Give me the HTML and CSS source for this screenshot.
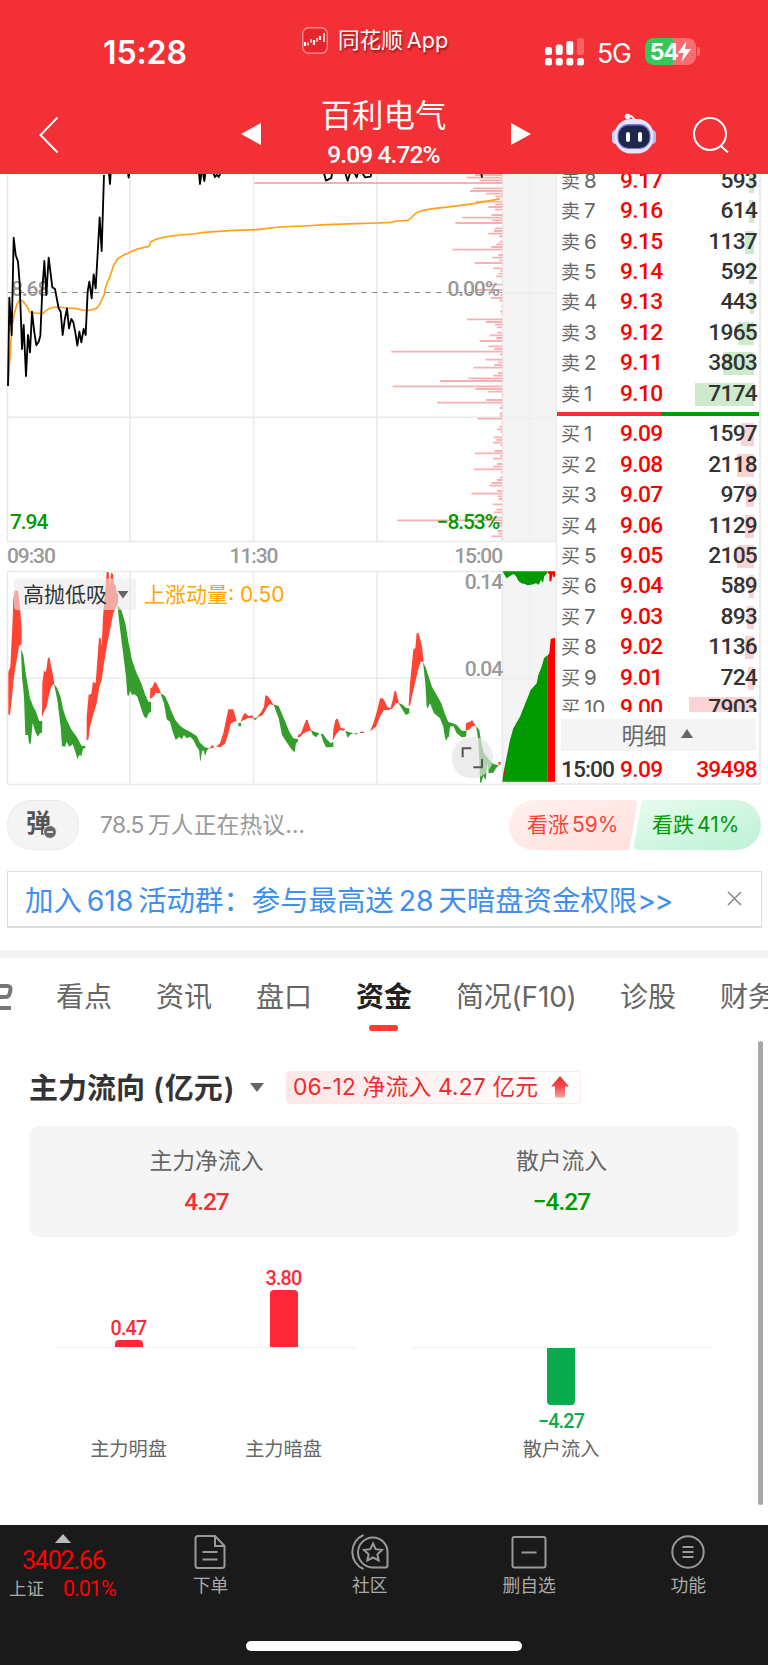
FILE: index.html
```
<!DOCTYPE html>
<html lang="zh-CN">

<head>
    <meta charset="UTF-8">
    <meta name="viewport" content="width=device-width, initial-scale=1.0">
    <title>百利电气</title>
    <link rel="stylesheet" href="styles.css">
</head>

<body>

    <header class="header">
        <div class="status">
            <div class="time">15:28</div>
            <div class="app">
                <svg width="26" height="27" viewBox="0 0 26 27">
                    <rect x=".7" y=".7" width="24.6" height="25.6" rx="6" fill="#e8252c" stroke="#ff8a8d" stroke-width="1.4"/>
                    <path d="M3 15v4M12 13v5M18 9v4" stroke="#fff" stroke-width="2.2"/>
                    <path d="M6 15.500v3M9 12v3.500M15 11v3.500M22 6v9" stroke="#fff" stroke-width="1.500"/>
                </svg>
                <span>同花顺<i>App</i></span>
            </div>
            <div class="signal">
                <svg width="40" height="28" viewBox="0 0 40 28" fill="#fff">
                    <rect x="0" y="9" width="7" height="8" rx="2.5"/>
                    <rect x="10.7" y="6.500" width="7" height="10.500" rx="2.500"/>
                    <rect x="21.300" y="3" width="7" height="14" rx="2.500"/>
                    <rect x="32" y="0" width="7" height="17" rx="2.500" opacity=".25"/>
                    <rect x="0" y="20" width="7" height="7.500" rx="2.500"/>
                    <rect x="10.700" y="20" width="7" height="7.500" rx="2.500"/>
                    <rect x="21.300" y="20" width="7" height="7.500" rx="2.500"/>
                    <rect x="32" y="20" width="7" height="7.500" rx="2.500"/>
                </svg>
            </div>
            <div class="net">5G</div>
            <div class="battery">
                <span>54</span>
                <svg width="13" height="21" viewBox="0 0 13 21"><path d="M8.500 0L0 12h5.500L3.500 21 13 8H7z" fill="#fff"/></svg>
            </div>
            <div class="nub"></div>
        </div>
        <div class="titlebar">
            <svg class="back" width="20" height="38" viewBox="0 0 20 38"><path d="M18.500 1.500L1.500 19l17 17.500" fill="none" stroke="#fff" stroke-width="2"/></svg>
            <svg class="prev" width="20" height="22" viewBox="0 0 20 22"><path d="M20 0v22L0 11z" fill="#fff"/></svg>
            <div class="stock">
                <h1>百利电气</h1>
                <p>9.09 4.72%</p>
            </div>
            <svg class="next" width="20" height="22" viewBox="0 0 20 22"><path d="M0 0v22l20-11z" fill="#fff"/></svg>
            <svg class="robot" width="44" height="42" viewBox="0 0 44 42">
                <path d="M15 3q7-1 8 6" fill="none" stroke="#e9eafa" stroke-width="2"/>
                <circle cx="15.500" cy="3.500" r="2.800" fill="#fff"/>
                <rect x="0" y="17" width="8" height="14" rx="4" fill="#cfcdf5"/>
                <rect x="36" y="17" width="8" height="14" rx="4" fill="#b9b5ef"/>
                <rect x="2.500" y="6" width="39" height="34.500" rx="16" fill="#e4e6fa"/>
                <rect x="5.500" y="11" width="33" height="25" rx="11" fill="#7f74e0"/>
                <rect x="6.500" y="12.500" width="31" height="22.500" rx="10" fill="#1e2649"/>
                <rect x="14" y="19" width="4" height="10" rx="2" fill="#fff"/>
                <rect x="26" y="19" width="4" height="10" rx="2" fill="#fff"/>
            </svg>
            <svg class="search" width="37" height="38" viewBox="0 0 37 38"><circle cx="17" cy="18" r="16" fill="none" stroke="#fff" stroke-width="2"/><path d="M28 30l7 6.500" stroke="#fff" stroke-width="2"/></svg>
        </div>
    </header>

    <main>
        <section class="market">
            <svg class="chart" width="557" height="612" viewBox="0 174 557 612">
                <!-- grid -->
                <rect x="502" y="174" width="54" height="368" fill="#f4f4f4"/>
                <rect x="502" y="571" width="54" height="213" fill="#f4f4f4"/>
                <path class="grid" d="M7.500 174V541.500H557M130 174V541M253.500 174V541M377 174V541M502.500 174V541M7.500 417.300H502M502 293.300H556M7.500 784.500V571.500H557M7.500 784.500H557M130 571V784M253.500 571V784M377 571V784M502.500 571V784M7.500 678.300H502M556.500 174V784"/>
                <path class="grid dots" d="M530 174V541M530 571V784M503 418H556M503 679H556"/>

                <text x="11" y="296" class="num gray">8.68</text>
                <path d="M8 292.500H502" stroke="#888" stroke-width="1.200" stroke-dasharray="5.500 5.200"/>

                <!-- chip distribution -->
                <path class="chips" transform="translate(240 170) scale(.33333)" d="M787 15H705M787 23H680M787 31H718M787 39H43M787 55H699M787 63H690M787 71H738M787 79H766M787 95H708M787 103H764M787 111H745M787 119H764M787 135H755M787 143H667M787 151H757M787 159H646M787 175H764M787 183H762M787 191H745M787 199H777M787 215H778M787 223H769M787 231H754M787 239H637M787 255H775M787 263H757M787 271H777M787 279H704M787 295H759M787 303H781M787 311H775M787 319H768M787 344H738M787 360H708M787 376H780M787 384H753M787 392H778M787 408H784M787 424H781M787 432H784M787 448H681M787 456H737M787 464H765M787 472H770M787 488H771M787 496H750M787 504H769M787 513H719M787 529H745M787 537H763M787 545H454M787 553H779M787 569H737M787 577H774M787 585H763M787 593H700M787 609H774M787 617H760M787 625H685M787 633H600M787 649H458M787 657H706M787 665H745M787 673H785M787 690H738M787 698H591M787 706H784M787 714H779"/>
                <path class="chips" transform="translate(0 390) scale(.35714 .33333)" d="M1406 70H1398M1406 78H1400M1406 86H1337M1406 102H1404M1406 110H1398M1406 118H1391M1406 126H1402M1406 142H1383M1406 150H1390M1406 158H1380M1406 166H1401M1406 183H1384M1406 190H1330M1406 198H1400M1406 206H1380M1406 222H1391M1406 230H1380M1406 238H1327M1406 246H1404M1406 262H1399M1406 270H1391M1406 279H1376M1406 287H1370M1406 303H1392M1406 311H1320M1406 319H1393M1406 327H1396M1406 343H1380M1406 359H1390M1406 367H1382M1406 383H1350M1406 391H1112M1406 399H1390M1406 407H1394M1406 423H1393M1406 431H1395M1406 439H1376M1406 447H1404"/>

                <!-- average and price lines -->
                <g transform="translate(0 170) scale(.33333)" fill="none" stroke-linejoin="round">
                    <path stroke="#ff9f1a" stroke-width="5" d="M24 648L30 560 36 470 42 435 50 405 58 390 68 393 78 405 90 427 105 429 128 431 140 420 155 413 175 411 200 414 225 415 245 420 265 421 290 415 300 402 312 375 318 348 330 320 340 288 352 267 370 256 390 247 412 237 447 229 453 215 470 207 500 200 540 195 580 192 610 187 690 182 770 179 840 171 910 168 980 164 1070 161 1130 159 1175 157 1190 153 1223 151 1235 142 1248 129 1270 121 1300 116 1360 109 1420 101 1480 90 1500 86"/>
                    <path stroke="#000" stroke-width="5.500" d="M24 648L28 383 35 495 41 203 47 255 54 275 59 340 66 537 71 465 78 618 84 495 90 547 96 425 102 480 109 526 116 515 121 497 127 360 133 273 139 375 146 263 157 352 165 357 176 415 182 425 188 495 194 450 201 415 207 475 214 447 220 457 226 487 232 527 238 485 244 517 251 477 257 495 263 365 268 335 275 385 281 313 287 355 293 250 299 142 305 243 312 14M327 10L330 42 332 10M384 10L386 23 388 10M597 10L600 42 604 10M609 10L613 33 616 10M640 10L645 21 650 14 656 21 661 10M972 10L978 32 994 24 996 10M1036 10L1043 32 1050 10M1064 10L1070 22 1074 10M1088 10L1095 22 1112 20 1114 10M1444 10L1446 23"/>
                </g>

                <text x="499" y="296" class="num gray" text-anchor="end">0.00%</text>
                <text x="10" y="529" class="num green">7.94</text>
                <text x="499" y="529" class="num green" text-anchor="end">−8.53%</text>
                <text x="7" y="563" class="num gray">09:30</text>
                <text x="253.500" y="563" class="num gray" text-anchor="middle">11:30</text>
                <text x="502" y="563" class="num gray" text-anchor="end">15:00</text>

                <!-- momentum -->
                <g transform="translate(0 560) scale(.33333)">
                    <path fill="#ff4433" d="M25 464V335L31 320 37 200 40 120 44 92H54L60 140 65 210V252L57 258 50 300 42 350 34 430 30 464ZM126 472L127 370 132 333 138 335 144 293H149L153 318 158 340 163 372 155 378 148 400 140 440 132 455ZM260 540V470L266 404 274 402 279 365 287 370 292 300 297 234H302L305 260 309 170 315 100 320 36H326L329 80 333 38 339 42 342 70 348 80 350 100 355 102 354 130 340 160 332 200 322 250 312 310 305 360 298 380 290 430 278 470 270 500 265 540ZM450 417L451 385 457 382 464 365 469 370 475 382 483 398 474 400 468 398 460 410ZM627 566L637 555 644 562ZM648 560L660 550 670 520 680 470 685 448H700L710 483 700 486 692 492 685 520 676 550 662 561ZM722 485L727 470 735 458 745 468 757 466 760 473 745 474 732 480ZM770 472L782 458 792 440 796 406 803 408 812 420 821 435 808 433 798 448 788 466Z"/>
                    <path fill="#339e2b" d="M63 268L70 285 78 345 90 415 100 440 108 455 117 482 127 484 126 518 120 520 113 530 106 515 98 488 92 552 87 550 84 525 76 525 72 410 66 350ZM162 372L172 385 182 412 190 450 200 480 215 510 230 530 245 558 256 557V564L249 566 244 588 238 585 232 597 226 575 218 553 208 560 200 545 195 560 186 558 182 500 172 420ZM352 135L364 150 376 190 386 250 396 300 410 340 424 370 436 405 445 425 453 425V456L447 458 440 475 432 470 425 450 412 410 402 402 396 405 390 392 387 407 382 405 378 350 368 270 358 190ZM481 399L495 408 505 430 515 455 526 480 540 497 555 508 575 518 590 528 600 548 615 562 627 565 620 572 616 588 610 570 606 575 601 606 597 570 590 560 580 540 570 530 560 535 552 525 545 538 538 530 527 540 518 515 510 485 500 478 492 430ZM715 489H723V499H715ZM757 472L765 474 775 472 765 481ZM820 433L836 438 846 462 858 490 868 515 880 535 895 538 893 545 888 550 884 577 876 570 862 550 846 525 836 475Z"/>
                </g>
                <g transform="translate(280 560) scale(.33333)">
                    <path fill="#ff4433" d="M53 532L55 524 63 520 70 500 78 480H83L88 498 94 511 80 515 68 522 60 532ZM158 542L160 510 166 480 172 475 178 490 182 503 196 507 190 512 180 510 170 520ZM240 515H252V519H240ZM270 514L280 490 292 450 300 415H308L315 425 322 442 332 443 338 420 343 394H348L352 410 357 428 347 430 338 445 325 450H312L300 470 288 500ZM386 437L390 370 397 300 400 268 406 265 410 220 415 218 420 235 426 260 431 305H422L414 330 406 365 398 400 390 437ZM557 512L558 490 572 484 576 480 581 488 588 496 575 500 570 508ZM655 606H662V614H655Z"/>
                    <path fill="#339e2b" d="M92 510L105 516 118 520 108 532 98 524ZM122 521L130 523 140 538 152 550 160 545V560L150 562H138L130 545ZM196 512L206 516 220 520 210 524 203 534ZM223 520H233V523H223ZM355 428L368 434 378 444 388 445V460L377 465 368 450ZM429 306L438 325 446 350 456 380 470 405 484 430 494 460 505 486 518 490 530 495 545 512 560 513 558 530 545 532 530 520 520 498 510 500 507 530 503 532 500 541 496 538 490 500 480 475 462 460 450 430 443 445 440 440 436 370ZM588 497L598 510 604 550 612 580 628 600 640 612 656 616 648 625 640 638 626 640 622 610 617 660 610 648 603 670 600 665 598 600 595 540Z"/>
                    <!-- order depth -->
                    <path fill="#009900" d="M667 665L670 640 680 590 690 540 700 505 720 470 740 420 752 390 770 370 775 345 785 320 792 295 802 286V665ZM668 34H803L800 42 793 48 789 68 783 60 776 74 768 70 755 74 742 76 735 72 724 70 715 62 708 48 700 42 690 48 680 55 672 42Z"/>
                    <path fill="#ff0000" d="M802 288L808 280 812 237 825 233V665H802ZM803 34H825V50L820 52 818 42 814 64H808V42L803 40ZM671 642L675 628V645Z"/>
                    <circle cx="577" cy="593" r="62" fill="#e4e4e4" fill-opacity=".7"/>
                    <path d="M548 592V565H574M580 622H606V597" fill="none" stroke="#555" stroke-width="6"/>
                </g>
                <text x="502" y="589" class="num gray" text-anchor="end">0.14</text>
                <text x="502" y="676" class="num gray" text-anchor="end">0.04</text>
                <rect x="14" y="578.500" width="122" height="31.500" rx="3" fill="#ebebeb" fill-opacity=".6"/>
                <text x="23" y="602" class="zh" fill="#333">高抛低吸</text>
                <path d="M117.500 591H128.500L123 598.500Z" fill="#666"/>
                <text x="144" y="602" class="zh" fill="#ffa500">上涨动量: 0.50</text>
            </svg>

            <div class="book">
                <div class="levels">
                    <div class="row sell"><span>卖<i>8</i></span><b>9.17</b><em>593</em><u style="width: 5px"></u></div>
                    <div class="row sell"><span>卖<i>7</i></span><b>9.16</b><em>614</em><u style="width: 5px"></u></div>
                    <div class="row sell"><span>卖<i>6</i></span><b>9.15</b><em>1137</em><u style="width: 9px"></u></div>
                    <div class="row sell"><span>卖<i>5</i></span><b>9.14</b><em>592</em><u style="width: 5px"></u></div>
                    <div class="row sell"><span>卖<i>4</i></span><b>9.13</b><em>443</em><u style="width: 4px"></u></div>
                    <div class="row sell"><span>卖<i>3</i></span><b>9.12</b><em>1965</em><u style="width: 16px"></u></div>
                    <div class="row sell"><span>卖<i>2</i></span><b>9.11</b><em>3803</em><u style="width: 31px"></u></div>
                    <div class="row sell"><span>卖<i>1</i></span><b>9.10</b><em>7174</em><u style="width: 59px"></u></div>
                    <div class="ratio"></div>
                    <div class="row buy"><span>买<i>1</i></span><b>9.09</b><em>1597</em><u style="width: 13px"></u></div>
                    <div class="row buy"><span>买<i>2</i></span><b>9.08</b><em>2118</em><u style="width: 17px"></u></div>
                    <div class="row buy"><span>买<i>3</i></span><b>9.07</b><em>979</em><u style="width: 8px"></u></div>
                    <div class="row buy"><span>买<i>4</i></span><b>9.06</b><em>1129</em><u style="width: 9px"></u></div>
                    <div class="row buy"><span>买<i>5</i></span><b>9.05</b><em>2105</em><u style="width: 17px"></u></div>
                    <div class="row buy"><span>买<i>6</i></span><b>9.04</b><em>589</em><u style="width: 5px"></u></div>
                    <div class="row buy"><span>买<i>7</i></span><b>9.03</b><em>893</em><u style="width: 7px"></u></div>
                    <div class="row buy"><span>买<i>8</i></span><b>9.02</b><em>1136</em><u style="width: 9px"></u></div>
                    <div class="row buy"><span>买<i>9</i></span><b>9.01</b><em>724</em><u style="width: 6px"></u></div>
                    <div class="row buy"><span>买<i>10</i></span><b>9.00</b><em>7903</em><u style="width: 65px"></u></div>
                </div>
                <div class="detail">明细 <svg width="12" height="9" viewBox="0 0 12 9"><path d="M6 0l6 9H0z" fill="#666"/></svg></div>
                <div class="row last"><span>15:00</span><b>9.09</b><em>39498</em></div>
            </div>
        </section>

        <section class="talk">
            <div class="danmu">弹
                <svg width="14" height="14" viewBox="0 0 14 14"><circle cx="7" cy="7" r="6.400" fill="#666" stroke="#f4f4f4"/><path d="M4 7h6" stroke="#fff" stroke-width="1.600"/></svg>
            </div>
            <div class="hot"><i>78.5</i>万人正在热议...</div>
            <div class="vote up">看涨<i>59%</i></div>
            <div class="vote down">看跌<i>41%</i></div>
        </section>

        <section class="banner">
            <span>加入<i>618</i>活动群：参与最高送<i>28</i>天暗盘资金权限<em>&gt;&gt;</em></span>
            <svg width="15" height="15" viewBox="0 0 15 15"><path d="M1 1l13 13M14 1L1 14" stroke="#888" stroke-width="1.500"/></svg>
        </section>

        <nav class="tabs">
            <svg width="13" height="28" viewBox="0 0 13 28"><path d="M0 3H7.500Q11 3 10.500 7L9.500 11Q9 14 5 14H0M0 25H11" fill="none" stroke="#777" stroke-width="4"/></svg>
            <a>看点</a>
            <a>资讯</a>
            <a>盘口</a>
            <a class="active">资金</a>
            <a class="f10">简况(F10)</a>
            <a>诊股</a>
            <a>财务</a>
        </nav>

        <section class="funds">
            <div class="scroll"></div>
            <div class="heading">
                <h2>主力流向<i>(</i>亿元<em>)</em></h2>
                <svg width="14" height="9" viewBox="0 0 14 9"><path d="M0 0h14L7 9z" fill="#666"/></svg>
                <div class="badge">
                    <span>06-12 净流入 4.27 亿元</span>
                    <svg width="18" height="22" viewBox="0 0 18 22">
                        <defs><linearGradient id="rise" x1="0" y1="0" x2="0" y2="1"><stop offset="0" stop-color="#f02b2f"/><stop offset=".5" stop-color="#f14a4c"/><stop offset="1" stop-color="#f9a0a0"/></linearGradient></defs>
                        <path d="M9 0l9 10.500h-4V20q0 1.500-1.500 1.500h-7Q4 21.500 4 20v-9.500H0z" fill="url(#rise)"/>
                    </svg>
                </div>
            </div>
            <div class="summary">
                <div>主力净流入<b class="red">4.27</b></div>
                <div>散户流入<b class="grn">−4.27</b></div>
            </div>
            <div class="bars">
                <div class="panel">
                    <div class="plot">
                        <div class="col"><b>0.47</b><s style="height: 7px"></s></div>
                        <div class="col"><b>3.80</b><s style="height: 57px"></s></div>
                    </div>
                    <div class="plot below"></div>
                    <div class="names"><span>主力明盘</span><span>主力暗盘</span></div>
                </div>
                <div class="panel">
                    <div class="plot"></div>
                    <div class="plot below">
                        <div class="col"><s style="height: 57px"></s><b>−4.27</b></div>
                    </div>
                    <div class="names"><span>散户流入</span></div>
                </div>
            </div>
        </section>
    </main>

    <footer class="footer">
        <div class="menu">
            <div class="index">
                <svg width="16" height="9" viewBox="0 0 16 9"><path d="M8 0l8 9H0z" fill="#bbb"/></svg>
                <b>3402.66</b>
                <div><span>上证</span><em>0.01%</em></div>
            </div>
            <div class="item">
                <svg width="36" height="36" viewBox="0 0 36 36"><path d="M5 2H22L31.500 12V31.500Q31.500 34 29 34H5Q2.500 34 2.500 31.500V4.500Q2.500 2 5 2ZM22 2V12H31.500M9.500 18H24.500M9.500 25.500H24.500"/></svg>
                下单
            </div>
            <div class="item">
                <svg width="38" height="36" viewBox="0 0 38 36"><path d="M12.500 1A18.500 18.500 0 0 0 12.500 35M22 3.500A15 15 0 1 0 22 33.500H34.500Q36.500 33.500 36.500 31.500V18A14.500 14.500 0 0 0 22 3.500ZM22 9.500L24.700 15.200 31 16 26.400 20.300 27.600 26.500 22 23.500 16.400 26.500 17.600 20.300 13 16 19.300 15.200Z"/></svg>
                社区
            </div>
            <div class="item">
                <svg width="36" height="36" viewBox="0 0 36 36"><rect x="1.500" y="3" width="33" height="30.500" rx="2"/><path d="M10.500 18.500H25.500"/></svg>
                删自选
            </div>
            <div class="item">
                <svg width="36" height="36" viewBox="0 0 36 36"><circle cx="18" cy="18" r="15.700"/><path d="M12.500 13H23.500M12.500 18H23.500M12.500 23H23.500"/></svg>
                功能
            </div>
        </div>
        <div class="home"></div>
    </footer>

</body>

</html>
```

FILE: styles.css
```
* {
    box-sizing: border-box;
}

body {
    margin: 0;
    padding: 0;
    width: 768px;
    height: 1665px;
    overflow: hidden;
    background-color: #fff;
    font-family: Inter, "Noto Sans CJK SC", sans-serif;
    color: #333;
}

h1, h2, p {
    margin: 0;
}

i, em {
    font-style: normal;
}

svg {
    display: block;
    flex-shrink: 0;
}

/* header */
.header {
    height: 174px;
    background-color: #f23036;
    color: #fff;
}

.status {
    display: flex;
    height: 80px;
    padding: 0 0 0 103px;
}

.time {
    width: 199px;
    margin-top: 32px;
    font-size: 32px;
    font-weight: 600;
    line-height: 42px;
    letter-spacing: -0.1px;
}

.app {
    display: flex;
    width: 243px;
    margin-top: 27px;
    gap: 10px;
    font-size: 21.6px;
    line-height: 27px;
    text-shadow: 1px 2px 2px rgba(90, 0, 0, 0.6);
    white-space: nowrap;
}

.app i {
    margin-left: 4px;
}

.signal {
    width: 52px;
    margin-top: 38px;
}

.net {
    width: 48px;
    margin-top: 36px;
    font-size: 26.5px;
    line-height: 35px;
    letter-spacing: -1px;
}

.battery {
    display: flex;
    align-items: center;
    justify-content: center;
    width: 51px;
    height: 27px;
    margin-top: 38px;
    border-radius: 8.5px;
    background: linear-gradient(90deg, #35c759 54%, #f96c71 54%);
    font-size: 23px;
    font-weight: 700;
    letter-spacing: -0.8px;
}

.nub {
    width: 3px;
    height: 9px;
    margin: 47px 0 0 1px;
    border-radius: 0 4px 4px 0;
    background-color: #f96c71;
}

.titlebar {
    display: flex;
    height: 94px;
}

.back {
    margin: 36px 182px 0 39px;
}

.prev, .next {
    margin-top: 43px;
}

.stock {
    width: 250px;
    margin-top: 15px;
    padding-right: 5px;
    text-align: center;
}

.stock h1 {
    font-size: 31.4px;
    font-weight: 400;
    line-height: 42px;
}

.stock p {
    margin-top: 3px;
    font-family: Roboto, sans-serif;
    font-size: 24.5px;
    font-weight: 500;
    line-height: 30px;
    letter-spacing: -0.9px;
}

.robot {
    margin: 33px 37px 0 81px;
}

.search {
    margin-top: 36px;
}

/* chart and order book */
.market {
    display: flex;
    height: 612px;
}

.grid {
    fill: none;
    stroke: #e9e9e9;
    stroke-width: 1.5;
}

.dots {
    stroke-dasharray: 2 2;
    stroke-width: 1;
}

.chips {
    fill: none;
    stroke: #f9b0b2;
    stroke-width: 5.5;
}

.num {
    font-family: Roboto, sans-serif;
    font-size: 21px;
    font-weight: 500;
    letter-spacing: -1.1px;
}

.gray {
    fill: #999;
}

.green {
    fill: #009900;
}

.zh {
    font-size: 21px;
}

.book {
    width: 204px;
    height: 611px;
    border-right: 2px solid #ececec;
    border-bottom: 2px solid #ececec;
}

.levels {
    height: 538px;
    overflow: hidden;
}

.levels .row:first-child {
    margin-top: -8.2px;
}

.row {
    position: relative;
    display: flex;
    height: 30.4px;
    padding: 0 2px 0 4px;
    line-height: 30.4px;
    font-family: Roboto, "Noto Sans CJK SC", sans-serif;
    font-size: 22.8px;
}

.row span {
    width: 59px;
    color: #666;
    font-size: 19px;
    white-space: nowrap;
}

.row span i {
    margin-left: 4px;
    font-family: Inter, sans-serif;
    font-size: 20.5px;
}

.row b {
    color: #ff0000;
    font-weight: 500;
    letter-spacing: -0.7px;
}

.row em {
    flex: 1;
    z-index: 1;
    color: #333;
    font-weight: 500;
    text-align: right;
    letter-spacing: -0.8px;
}

/* volume block behind the amount */
.row u {
    position: absolute;
    top: 4px;
    right: 5px;
    height: 23px;
}

.sell u {
    background-color: #cdeacd;
}

.buy u {
    background-color: #fbd3d4;
}

.ratio {
    height: 4px;
    margin: 3.4px 0 3.1px;
    background: linear-gradient(90deg, #f23036 51.5%, #009900 51.5%);
}

.detail {
    display: flex;
    align-items: center;
    justify-content: center;
    gap: 14px;
    height: 32px;
    margin: 7px 3px 4px 4px;
    padding: 0 3px 3px 0;
    background-color: #f4f4f4;
    color: #666;
    font-size: 22.5px;
}

.last span {
    color: #333;
    font-size: 22.8px;
    font-weight: 500;
    letter-spacing: -1px;
}

.last em {
    color: #ff0000;
}

/* discussion */
.talk {
    display: flex;
    height: 85px;
    padding: 14px 0 0 7px;
    line-height: 50px;
}

.danmu {
    position: relative;
    width: 72px;
    height: 50px;
    padding-left: 18px;
    border: 1px solid #ebebeb;
    border-radius: 24px;
    background-color: #f4f4f4;
    color: #555;
    font-size: 25px;
    font-weight: 700;
    line-height: 44px;
}

.danmu svg {
    position: absolute;
    left: 35px;
    top: 24px;
}

.hot {
    width: 430px;
    padding-left: 21px;
    color: #999;
    font-size: 22.8px;
    letter-spacing: 0.1px;
}

.hot i {
    margin-right: 4px;
    letter-spacing: -0.6px;
}

.vote {
    height: 50px;
    font-size: 21px;
    white-space: nowrap;
}

.vote i {
    margin-left: 3px;
    font-size: 21px;
}

.up {
    width: 129px;
    padding-left: 18px;
    border-radius: 25px 5px 5px 25px;
    background: linear-gradient(160deg, #fff1ef, #ffe0dd);
    clip-path: polygon(0 0, 100% 0, calc(100% - 9px) 100%, 0 100%);
    color: #fb4438;
}

.down {
    width: 128px;
    margin-left: -5px;
    padding-left: 19px;
    border-radius: 5px 25px 25px 5px;
    background: linear-gradient(160deg, #e6fbef, #bdf2d5);
    clip-path: polygon(9px 0, 100% 0, 100% 100%, 0 100%);
    color: #009900;
}

.banner {
    display: flex;
    align-items: center;
    justify-content: space-between;
    width: 755px;
    height: 57px;
    margin-left: 7px;
    padding: 0 19px 2px 17px;
    border: 1px solid #ddd;
    border-bottom-width: 2px;
    color: #3f8ff0;
    font-size: 28.4px;
    white-space: nowrap;
}

.banner i {
    margin: 0 5px;
    letter-spacing: -0.1px;
}

.banner em {
    letter-spacing: -1.5px;
}

/* tabs */
.tabs {
    display: flex;
    height: 91px;
    margin-top: 22px;
    border-top: 8px solid #f4f4f4;
    overflow: hidden;
}

.tabs svg {
    margin: 25px 43px 0 0;
}

.tabs a {
    width: 100px;
    flex-shrink: 0;
    color: #666;
    font-size: 28px;
    line-height: 79px;
    white-space: nowrap;
}

.tabs .active {
    color: #222;
    font-weight: 700;
}

.tabs .active::after {
    content: "";
    display: block;
    width: 29px;
    height: 6px;
    margin: -12px 0 0 13px;
    border-radius: 3px;
    background-color: #fd3a32;
}

.tabs .f10 {
    width: 164px;
    letter-spacing: -0.2px;
}

/* money flow */
.funds {
    position: relative;
    height: 484px;
    padding-top: 29px;
}

.scroll {
    position: absolute;
    right: 5.5px;
    top: 0;
    width: 5px;
    height: 464px;
    border-radius: 3px;
    background-color: #a8a8a8;
}

.heading {
    display: flex;
    align-items: center;
    height: 34px;
    padding-left: 29px;
}

.heading h2 {
    width: 221px;
    padding-bottom: 3px;
    font-size: 29px;
    font-weight: 700;
    white-space: nowrap;
}

.heading h2 i {
    margin: 0 1px 0 8px;
    font-weight: 600;
}

.heading h2 em {
    margin-left: 1px;
    font-weight: 600;
}

.badge {
    display: flex;
    align-items: center;
    justify-content: space-between;
    width: 295px;
    height: 33px;
    margin-left: 22px;
    padding: 0 11px 0 6px;
    border: 1px solid #ffe8e8;
    border-radius: 4px;
    background: linear-gradient(90deg, #fee6e6, #fff);
    color: #ee2c2f;
    font-size: 22.8px;
    white-space: nowrap;
}

.badge span {
    padding-bottom: 3px;
    letter-spacing: 0.15px;
}

.summary {
    display: flex;
    width: 710px;
    height: 111px;
    margin: 22px 0 0 29px;
    padding-top: 17px;
    border-radius: 10px;
    background-color: #f5f5f5;
}

.summary div {
    flex: 1;
    color: #666;
    font-size: 22.8px;
    line-height: 36px;
    text-align: center;
}

.summary b {
    display: block;
    margin-top: 5px;
    font-family: Roboto, sans-serif;
    font-size: 24.5px;
    font-weight: 500;
    letter-spacing: -1px;
}

.summary .red {
    color: #f23036;
}

.summary .grn {
    color: #009900;
}

.bars {
    display: flex;
    margin-left: 28.5px;
}

.panel {
    width: 355px;
}

.plot {
    display: flex;
    justify-content: center;
    align-items: flex-end;
    width: 298px;
    height: 110px;
    margin: 0 auto;
}

.below {
    align-items: flex-start;
    height: 86px;
    border-top: 1.5px solid #f1f1f1;
}

.col {
    width: 155px;
    flex-shrink: 0;
    color: #ff2838;
    text-align: center;
}

.col b {
    display: block;
    font-family: Roboto, sans-serif;
    font-size: 19.8px;
    font-weight: 500;
    line-height: 22px;
    letter-spacing: -0.8px;
}

.col s {
    display: block;
    width: 28px;
    margin: 0 auto;
    border-radius: 4px 4px 0 0;
    background-color: #ff2838;
}

.below .col {
    color: #0aab4e;
}

.below .col s {
    margin-bottom: 6px;
    border-radius: 0 0 4px 4px;
    background-color: #0aab4e;
}

.names {
    display: flex;
    justify-content: center;
}

.names span {
    width: 155px;
    color: #666;
    font-size: 19.2px;
    line-height: 32px;
    text-align: center;
}

/* bottom bar */
.footer {
    height: 140px;
    background-color: #1a1a1a;
}

.menu {
    display: flex;
    height: 116px;
}

.index {
    width: 131px;
    padding-top: 9px;
    font-family: Roboto, "Noto Sans CJK SC", sans-serif;
}

.index svg {
    margin-left: 55px;
}

.index b {
    display: block;
    padding-left: 22px;
    color: #ff0000;
    font-size: 25px;
    font-weight: 400;
    line-height: 36px;
    letter-spacing: -1.2px;
}

.index div {
    display: flex;
    padding-left: 9px;
    line-height: 20px;
}

.index span {
    width: 54px;
    color: #aaa;
    font-size: 17.5px;
}

.index em {
    color: #ff0000;
    font-size: 21.5px;
    font-weight: 400;
    letter-spacing: -1px;
}

.item {
    display: flex;
    flex: 1;
    flex-direction: column;
    align-items: center;
    padding-top: 9px;
    color: #aaa;
    font-size: 17.8px;
    line-height: 32px;
}

.item svg {
    fill: none;
    stroke: #999;
    stroke-width: 2;
}

.home {
    width: 276px;
    height: 10px;
    margin: 0 auto;
    border-radius: 5px;
    background-color: #fff;
}
```
